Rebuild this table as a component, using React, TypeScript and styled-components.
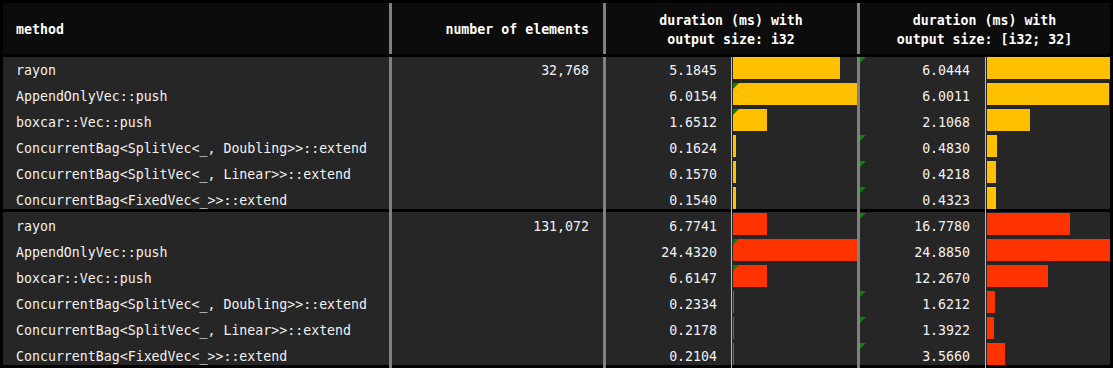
import styled, { createGlobalStyle } from 'styled-components';

const GlobalStyle = createGlobalStyle`
    html, body {
        margin: 0;
        padding: 0;
        background: #000;
    }
    * {
        box-sizing: border-box;
    }
`

type Row = {
    name: string;
    d1: number;
    d2: number;
    mark1?: boolean;
    mark2?: boolean;
}

type Group = {
    count: string;
    color: string;
    rows: Row[];
}

const groups: Group[] = [
    {
        count: '32,768',
        color: '#ffc000',
        rows: [
            { name: 'rayon', d1: 5.1845, d2: 6.0444, mark2: true },
            { name: 'AppendOnlyVec::push', d1: 6.0154, d2: 6.0011, mark1: true },
            { name: 'boxcar::Vec::push', d1: 1.6512, d2: 2.1068, mark1: true },
            { name: 'ConcurrentBag<SplitVec<_, Doubling>>::extend', d1: 0.1624, d2: 0.4830, mark2: true },
            { name: 'ConcurrentBag<SplitVec<_, Linear>>::extend', d1: 0.1570, d2: 0.4218, mark2: true },
            { name: 'ConcurrentBag<FixedVec<_>>::extend', d1: 0.1540, d2: 0.4323, mark2: true },
        ],
    },
    {
        count: '131,072',
        color: '#ff3300',
        rows: [
            { name: 'rayon', d1: 6.7741, d2: 16.7780, mark2: true },
            { name: 'AppendOnlyVec::push', d1: 24.4320, d2: 24.8850, mark1: true },
            { name: 'boxcar::Vec::push', d1: 6.6147, d2: 12.2670, mark1: true },
            { name: 'ConcurrentBag<SplitVec<_, Doubling>>::extend', d1: 0.2334, d2: 1.6212, mark2: true },
            { name: 'ConcurrentBag<SplitVec<_, Linear>>::extend', d1: 0.2178, d2: 1.3922, mark2: true },
            { name: 'ConcurrentBag<FixedVec<_>>::extend', d1: 0.2104, d2: 3.5660, mark2: true },
        ],
    },
]

const Sheet = styled.div`
    width: 1113px;
    border: 3px solid #000;
    background: #262626;
    font-family: 'DejaVu Sans Mono', 'Liberation Mono', monospace;
    font-size: 13.25px;
    color: #f2f2f2;
`

const Header = styled.div`
    display: grid;
    grid-template-columns: 389px 214px 254px 250px;
    height: 51px;
    background: #0c0c0c;
    font-weight: bold;
    color: #fff;
`

const HeadCell = styled.div<{ $align: 'left' | 'right' | 'center', $sep?: boolean }>`
    display: flex;
    flex-direction: column;
    justify-content: center;
    align-items: ${(p) => p.$align === 'left' ? 'flex-start' : p.$align === 'right' ? 'flex-end' : 'center'};
    text-align: ${(p) => p.$align};
    line-height: 19px;
    padding: 2px 14px 0 13px;
    border-right: ${(p) => p.$sep ? '3px solid #808080' : 'none'};
`

const Block = styled.div<{ $first?: boolean }>`
    border-top: 3px solid #000;
    padding-top: ${(p) => p.$first ? '0' : '1px'};
    background: #262626;
`

const Line = styled.div`
    display: grid;
    grid-template-columns: 389px 214px 125px 129px 125px 125px;
    height: 26px;
    line-height: 27px;
    white-space: pre;
    &:last-child {
        height: 22px;
    }
`

const NameCell = styled.div`
    padding-left: 13px;
    border-right: 3px solid #808080;
`

const NumCell = styled.div<{ $pad: number, $sep?: boolean }>`
    position: relative;
    text-align: right;
    padding-right: ${(p) => p.$pad}px;
    border-right: ${(p) => p.$sep ? '3px solid #808080' : 'none'};
`

const BarCell = styled.div<{ $sep?: boolean }>`
    position: relative;
    padding-left: 1px;
    border-left: 1px solid #bdbdbd;
    border-right: ${(p) => p.$sep ? '3px solid #808080' : 'none'};
`

const Bar = styled.div<{ $color: string }>`
    height: 22px;
    background: ${(p) => p.$color};
`

const Marker = styled.span`
    position: absolute;
    top: 0;
    left: 0;
    width: 0;
    height: 0;
    border-top: 6px solid #0b800b;
    border-right: 6px solid transparent;
`

const fmt = (v: number) => v.toFixed(4)

export default function App() {
    return (
        <>
            <GlobalStyle />
            <Sheet>
                <Header>
                    <HeadCell $align="left" $sep>method</HeadCell>
                    <HeadCell $align="right" $sep>number of elements</HeadCell>
                    <HeadCell $align="center" $sep>
                        <span>duration (ms) with</span>
                        <span>output size: i32</span>
                    </HeadCell>
                    <HeadCell $align="center">
                        <span>duration (ms) with</span>
                        <span>output size: [i32; 32]</span>
                    </HeadCell>
                </Header>
                {groups.map((g, gi) => {
                    const max1 = Math.max(...g.rows.map((r) => r.d1))
                    const max2 = Math.max(...g.rows.map((r) => r.d2))
                    return (
                        <Block key={g.count} $first={gi === 0}>
                            {g.rows.map((r, i) => (
                                <Line key={r.name}>
                                    <NameCell>{r.name}</NameCell>
                                    <NumCell $pad={14} $sep>{i === 0 ? g.count : ''}</NumCell>
                                    <NumCell $pad={14}>{fmt(r.d1)}</NumCell>
                                    <BarCell $sep>
                                        <Bar $color={g.color} style={{ width: `${(r.d1 / max1) * 100}%` }} />
                                        {r.mark1 && <Marker style={{ left: 1 }} />}
                                    </BarCell>
                                    <NumCell $pad={15}>
                                        {r.mark2 && <Marker />}
                                        {fmt(r.d2)}
                                    </NumCell>
                                    <BarCell>
                                        <Bar $color={g.color} style={{ width: `${(r.d2 / max2) * 100}%` }} />
                                    </BarCell>
                                </Line>
                            ))}
                        </Block>
                    )
                })}
            </Sheet>
        </>
    )
}
